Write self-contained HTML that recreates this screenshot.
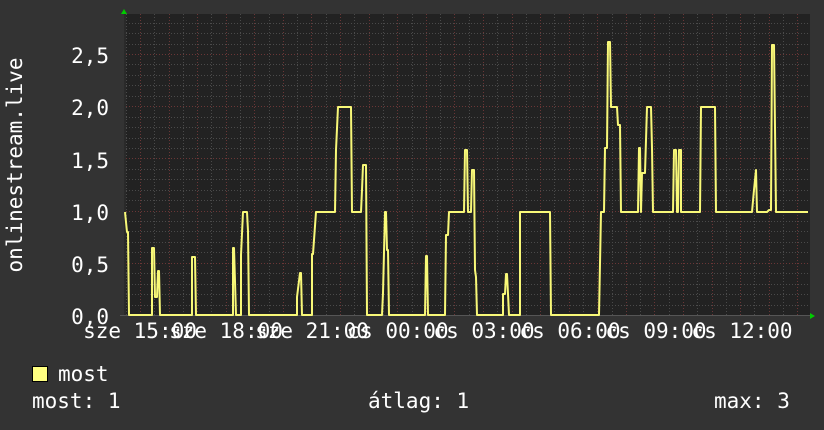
<!DOCTYPE html>
<html><head><meta charset="utf-8"><style>
html,body{margin:0;padding:0;background:#333;}
svg{display:block}
text{font-family:"DejaVu Sans Mono","Liberation Mono",monospace;font-size:21px;fill:#fff}
</style></head><body>
<svg width="824" height="430" viewBox="0 0 824 430" xmlns="http://www.w3.org/2000/svg">
<rect width="824" height="430" fill="#333"/>
<rect x="124" y="14" width="686" height="302" fill="#222"/>
<rect x="124" y="14" width="2" height="302" fill="#2a2a2a"/>
<g id="grid" stroke-width="1" stroke-dasharray="1,2" fill="none">
<g stroke="#4a4a4a" id="minorv"></g>
<g stroke="#4a4a4a" id="minorh"></g>
<g stroke="#6a3636" id="majorv"></g>
<g stroke="#6a3636" id="majorh"></g>
</g>
<line x1="120" y1="315.5" x2="812" y2="315.5" stroke="#555" />
<polygon points="121,14 124,9 127,14" fill="#0c0"/>
<polygon points="810,313 815,316 810,319" fill="#0c0"/>
<polyline fill="none" stroke="#f8f878" stroke-width="2" stroke-linejoin="round" points="
125,212 127,232 128,232 129,315 152,315 152,248 154,248 155,297 157,297 158,271 159,271 160,315
192,315 192,257 195,257 196,315 233,315 233,248 234,248 236,315 241,315 241,255 243,212 247,212 248,231 249,315
297,315 297,297 300,273 301,273 302,315 312,315 312,254 313,254 316,212 335,212 336,150 338,107 351,107 352,212 361,212 362,190 363,165 366,165 367,315
382,315 383,293 385,212 386,212 387,250 388,250 389,315 425,315 426,256 427,256 428,315
445,315 446,235 448,235 449,212 464,212 465,150 467,150 468,212 471,212 472,170 474,170 475,270 476,277 477,315
503,315 503,294 505,294 506,274 507,274 508,294 509,315 520,315 520,212 550,212 551,315
599,315 601,212 604,212 605,148 607,148 608,42 610,42 611,107 617,107 618,125 620,125 621,212 638,212 639,148 640,148 641,212 642,173 645,173 647,107 651,107 652,148 653,212
673,212 674,150 676,150 677,212 678,212 679,150 681,150 681,212 700,212 701,107 715,107 716,212 752,212 754,190 756,170 757,212 767,212 769,210 771,210 772,45 774,45 775,128 776,212 808,212"/>
<text x="0" y="0" transform="translate(22,165) rotate(-90)" text-anchor="middle">onlinestream.live</text>
<g text-anchor="end">
<text x="109" y="63">2,5</text>
<text x="109" y="115">2,0</text>
<text x="109" y="168">1,5</text>
<text x="109" y="220">1,0</text>
<text x="109" y="272">0,5</text>
<text x="109" y="324">0,0</text>
</g>
<g text-anchor="middle">
<text x="140" y="338">sze 15:00</text>
<text x="226" y="338">sze 18:00</text>
<text x="312" y="338">sze 21:00</text>
<text x="398" y="338">cs 00:00</text>
<text x="484" y="338">cs 03:00</text>
<text x="570" y="338">cs 06:00</text>
<text x="656" y="338">cs 09:00</text>
<text x="742" y="338">cs 12:00</text>
</g>
<rect x="32.5" y="366.5" width="15" height="15" fill="#ffff80" stroke="#000"/>
<text x="58" y="381">most</text>
<text x="32" y="408">most: 1</text>
<text x="368" y="408">átlag: 1</text>
<text x="714" y="408">max: 3</text>
</svg>
<script>
(function(){
var ns="http://www.w3.org/2000/svg";
function L(g,x1,y1,x2,y2){var l=document.createElementNS(ns,"line");l.setAttribute("x1",x1);l.setAttribute("y1",y1);l.setAttribute("x2",x2);l.setAttribute("y2",y2);document.getElementById(g).appendChild(l);}
for(var i=-1;i<50;i++){var x=Math.round(140+i*14.29)+0.5;if(x<126||x>810)continue;L(i%2==0?"majorv":"minorv",x,14,x,316);}
for(var j=1;j<30;j++){var y=Math.round(315-j*10.44)+0.5;if(y<14)continue;L(j%5==0?"majorh":"minorh",126,y,810,y);}
})();
</script>
</body></html>
